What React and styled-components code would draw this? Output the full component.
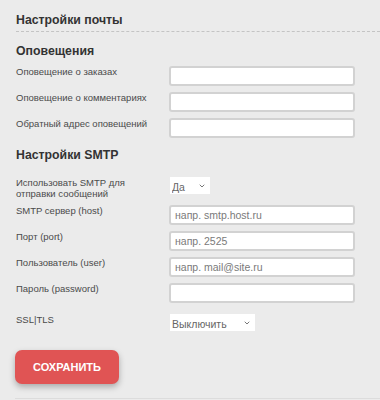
import styled, { createGlobalStyle } from "styled-components";
import { ChevronDown } from "lucide-react";

const GlobalStyle = createGlobalStyle`
  html, body {
    margin: 0;
    padding: 0;
    background: #ebebeb;
    font-family: "Liberation Sans", Arial, sans-serif;
  }
`;

const Page = styled.div`
  padding: 13px 0 0 16px;
  width: 364px;
`;

const Title = styled.h1`
  margin: 0;
  padding-bottom: 3px;
  font-size: 12.3px;
  line-height: 15px;
  font-weight: bold;
  color: #333;
  border-bottom: 1px dashed #c4c4c4;
`;

const SectionTitle = styled.h2`
  margin: ${(p) => p.$top}px 0 8px;
  font-size: 12.3px;
  line-height: 14px;
  font-weight: bold;
  color: #333;
`;

/* margins between rows collapse, so $mt is the whole gap above the row */
const Row = styled.div`
  display: grid;
  grid-template-columns: 153px 186px;
  align-items: start;
  margin-bottom: 6px;
  margin-top: ${(p) => p.$mt || 0}px;
`;

const Label = styled.label`
  padding-top: 1px;
  font-size: 9.5px;
  line-height: 10.5px;
  color: #4a4a4a;
  max-width: 135px;
`;

const Input = styled.input`
  box-sizing: border-box;
  width: 186px;
  height: 20px;
  margin: 0;
  padding: 0 4px;
  border: 2px solid #d2d2d2;
  border-radius: 3px;
  background: #fff;
  font-family: inherit;
  font-size: 10.5px;
  color: #333;
  outline: none;

  &::placeholder {
    color: #7a7a7a;
  }
`;

const SelectBox = styled.div`
  position: relative;
  width: ${(p) => p.$w}px;
  height: 17px;
  margin-left: 1px;
  background: #fff;
`;

const Select = styled.select`
  appearance: none;
  -webkit-appearance: none;
  box-sizing: border-box;
  width: 100%;
  height: 17px;
  margin: 0;
  padding: 0 0 0 2px;
  border: none;
  border-radius: 0;
  background: transparent;
  font-family: inherit;
  font-size: 10.5px;
  color: #666;
  outline: none;
`;

const Chevron = styled(ChevronDown)`
  position: absolute;
  right: 4px;
  top: 5px;
  color: #777;
  pointer-events: none;
`;

const SaveButton = styled.button`
  display: block;
  margin: 19px 0 14px -1px;
  width: 104px;
  height: 34px;
  border: none;
  border-radius: 7px;
  background: #e05454;
  color: #fff;
  font-family: inherit;
  font-size: 11px;
  font-weight: bold;
  box-shadow: 0 3px 6px rgba(0, 0, 0, 0.28);
  cursor: pointer;
`;

const BottomLine = styled.div`
  margin-left: -1px;
  border-top: 1px solid #dcdcdc;
  height: 4px;
`;

export default function App() {
  return (
    <>
      <GlobalStyle />
      <Page>
        <Title>Настройки почты</Title>

        <SectionTitle $top={12}>Оповещения</SectionTitle>
        <Row>
          <Label>Оповещение о заказах</Label>
          <Input />
        </Row>
        <Row>
          <Label>Оповещение о комментариях</Label>
          <Input />
        </Row>
        <Row>
          <Label>Обратный адрес оповещений</Label>
          <Input />
        </Row>

        <SectionTitle $top={10}>Настройки SMTP</SectionTitle>
        <Row $mt={15}>
          <Label>Использовать SMTP для отправки сообщений</Label>
          <SelectBox $w={40}>
            <Select defaultValue="1">
              <option value="1">Да</option>
              <option value="0">Нет</option>
            </Select>
            <Chevron size={8} strokeWidth={3} />
          </SelectBox>
        </Row>
        <Row>
          <Label>SMTP сервер (host)</Label>
          <Input placeholder="напр. smtp.host.ru" />
        </Row>
        <Row>
          <Label>Порт (port)</Label>
          <Input placeholder="напр. 2525" />
        </Row>
        <Row>
          <Label>Пользователь (user)</Label>
          <Input placeholder="напр. mail@site.ru" />
        </Row>
        <Row>
          <Label>Пароль (password)</Label>
          <Input type="password" />
        </Row>
        <Row $mt={11}>
          <Label>SSL|TLS</Label>
          <SelectBox $w={85}>
            <Select defaultValue="off">
              <option value="off">Выключить</option>
              <option value="ssl">SSL</option>
              <option value="tls">TLS</option>
            </Select>
            <Chevron size={8} strokeWidth={3} />
          </SelectBox>
        </Row>

        <SaveButton>СОХРАНИТЬ</SaveButton>
        <BottomLine />
      </Page>
    </>
  );
}
